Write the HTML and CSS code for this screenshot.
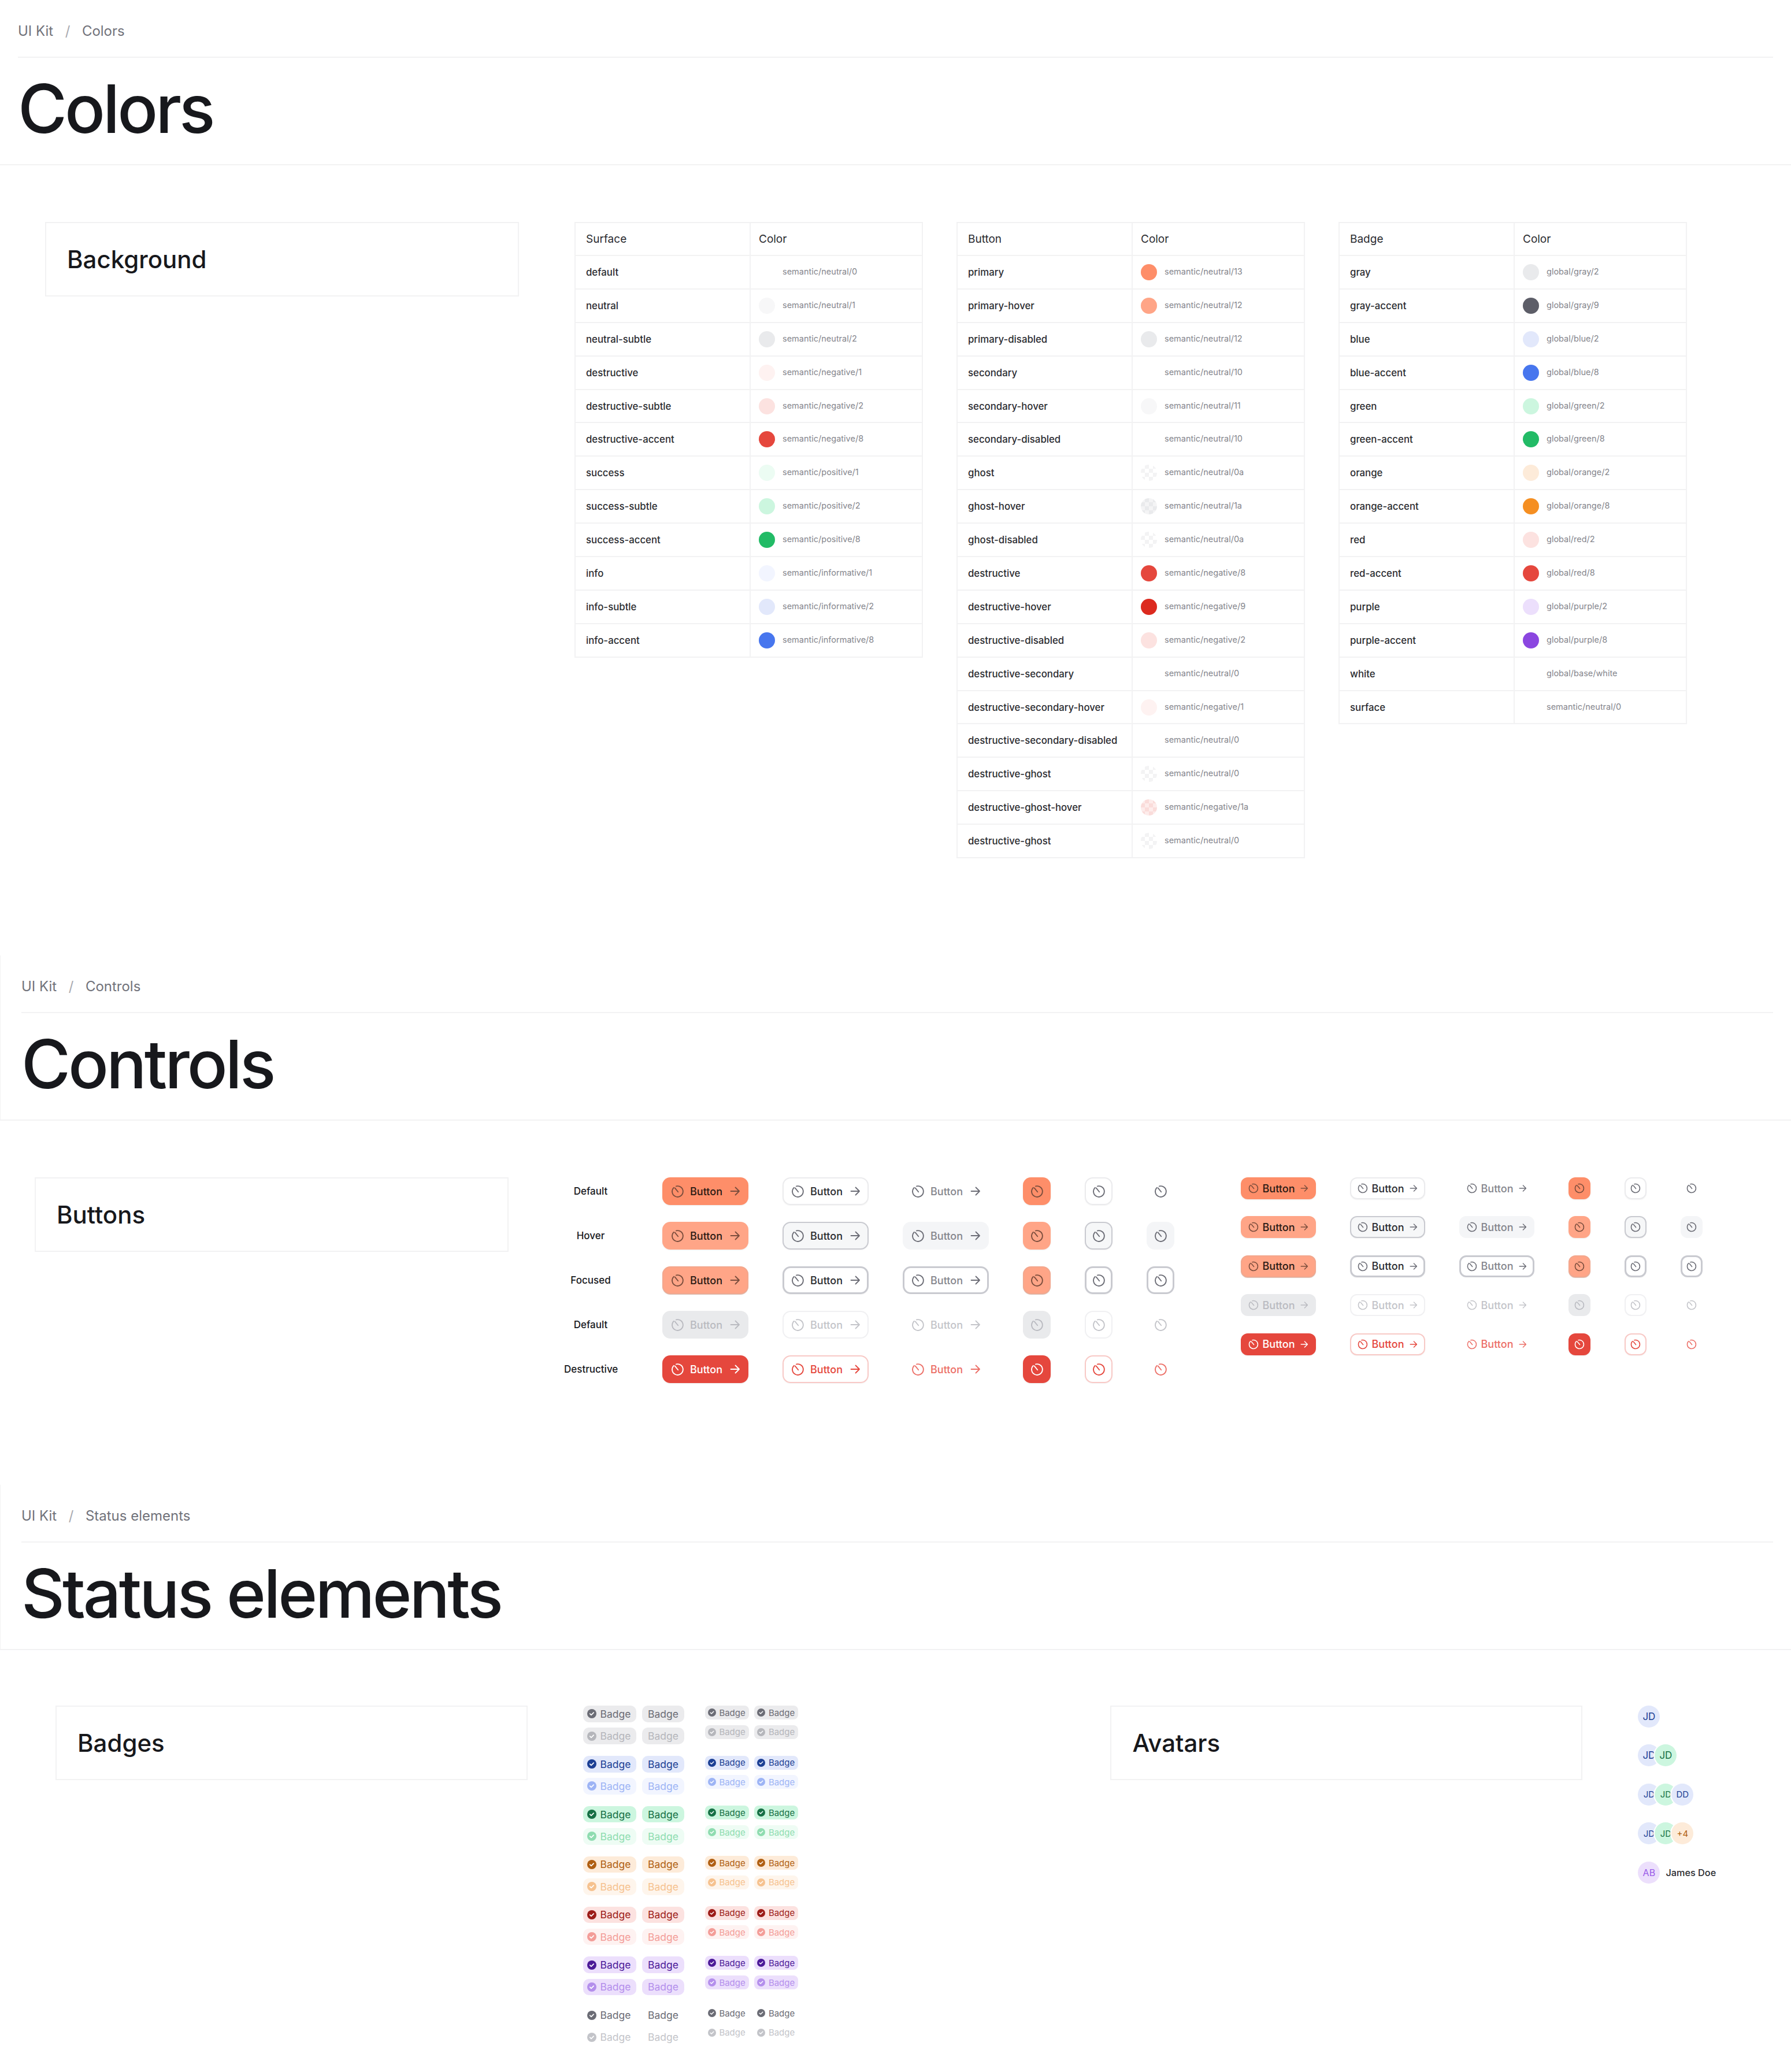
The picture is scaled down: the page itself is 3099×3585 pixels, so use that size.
FILE: index.html
```html
<!DOCTYPE html>
<html lang="en">
<head>
    <meta charset="UTF-8">
    <title>UI Kit</title>
    <link rel="stylesheet" href="styles.css">
</head>
<body>
    <!-- shared icons -->
    <svg class="sprite" aria-hidden="true">
        <symbol id="timer" viewBox="0 0 24 24"><path d="M9.6 3.3A9 9 0 1 1 5.6 5.6M7.4 6.2l5.3 6.5" fill="none" stroke="currentColor" stroke-width="1.8" stroke-linecap="round"/></symbol>
        <symbol id="arrow" viewBox="0 0 18 18"><path d="M1.5 9h14.5M9.5 2.5 16 9l-6.5 6.5" fill="none" stroke="currentColor" stroke-width="1.8" stroke-linecap="round" stroke-linejoin="round"/></symbol>
        <symbol id="check" viewBox="0 0 16 16"><circle cx="8" cy="8" r="8" fill="currentColor"/><path d="M4.8 8.2 7 10.3l4.2-4.2" fill="none" stroke="#fff" stroke-width="1.7" stroke-linecap="round" stroke-linejoin="round"/></symbol>
    </svg>

    <!-- Colors -->
    <section class="page page-colors">
        <header class="page-head">
            <nav class="crumbs"><span>UI Kit</span><span class="sep">/</span><span>Colors</span></nav>
            <h1>Colors</h1>
        </header>
        <div class="page-body">
            <div class="card"><h2>Background</h2></div>
            <div class="tables">
                <table>
                    <tr><th>Surface</th><th>Color</th></tr>
                    <tr><td>default</td><td><i class="dot"></i>semantic/neutral/0</td></tr>
                    <tr><td>neutral</td><td><i class="dot n1"></i>semantic/neutral/1</td></tr>
                    <tr><td>neutral-subtle</td><td><i class="dot n2"></i>semantic/neutral/2</td></tr>
                    <tr><td>destructive</td><td><i class="dot r1"></i>semantic/negative/1</td></tr>
                    <tr><td>destructive-subtle</td><td><i class="dot r2"></i>semantic/negative/2</td></tr>
                    <tr><td>destructive-accent</td><td><i class="dot r8"></i>semantic/negative/8</td></tr>
                    <tr><td>success</td><td><i class="dot g1"></i>semantic/positive/1</td></tr>
                    <tr><td>success-subtle</td><td><i class="dot g2"></i>semantic/positive/2</td></tr>
                    <tr><td>success-accent</td><td><i class="dot g8"></i>semantic/positive/8</td></tr>
                    <tr><td>info</td><td><i class="dot b1"></i>semantic/informative/1</td></tr>
                    <tr><td>info-subtle</td><td><i class="dot b2"></i>semantic/informative/2</td></tr>
                    <tr><td>info-accent</td><td><i class="dot b8"></i>semantic/informative/8</td></tr>
                </table>
                <table>
                    <tr><th>Button</th><th>Color</th></tr>
                    <tr><td>primary</td><td><i class="dot p13"></i>semantic/neutral/13</td></tr>
                    <tr><td>primary-hover</td><td><i class="dot p12"></i>semantic/neutral/12</td></tr>
                    <tr><td>primary-disabled</td><td><i class="dot n2"></i>semantic/neutral/12</td></tr>
                    <tr><td>secondary</td><td><i class="dot"></i>semantic/neutral/10</td></tr>
                    <tr><td>secondary-hover</td><td><i class="dot n1"></i>semantic/neutral/11</td></tr>
                    <tr><td>secondary-disabled</td><td><i class="dot"></i>semantic/neutral/10</td></tr>
                    <tr><td>ghost</td><td><i class="dot check-0"></i>semantic/neutral/0a</td></tr>
                    <tr><td>ghost-hover</td><td><i class="dot check-1"></i>semantic/neutral/1a</td></tr>
                    <tr><td>ghost-disabled</td><td><i class="dot check-0"></i>semantic/neutral/0a</td></tr>
                    <tr><td>destructive</td><td><i class="dot r8"></i>semantic/negative/8</td></tr>
                    <tr><td>destructive-hover</td><td><i class="dot r9"></i>semantic/negative/9</td></tr>
                    <tr><td>destructive-disabled</td><td><i class="dot r2"></i>semantic/negative/2</td></tr>
                    <tr><td>destructive-secondary</td><td><i class="dot"></i>semantic/neutral/0</td></tr>
                    <tr><td>destructive-secondary-hover</td><td><i class="dot r1"></i>semantic/negative/1</td></tr>
                    <tr><td>destructive-secondary-disabled</td><td><i class="dot"></i>semantic/neutral/0</td></tr>
                    <tr><td>destructive-ghost</td><td><i class="dot check-0"></i>semantic/neutral/0</td></tr>
                    <tr><td>destructive-ghost-hover</td><td><i class="dot check-r"></i>semantic/negative/1a</td></tr>
                    <tr><td>destructive-ghost</td><td><i class="dot check-0"></i>semantic/neutral/0</td></tr>
                </table>
                <table>
                    <tr><th>Badge</th><th>Color</th></tr>
                    <tr><td>gray</td><td><i class="dot n2"></i>global/gray/2</td></tr>
                    <tr><td>gray-accent</td><td><i class="dot n9"></i>global/gray/9</td></tr>
                    <tr><td>blue</td><td><i class="dot b2"></i>global/blue/2</td></tr>
                    <tr><td>blue-accent</td><td><i class="dot b8"></i>global/blue/8</td></tr>
                    <tr><td>green</td><td><i class="dot g2"></i>global/green/2</td></tr>
                    <tr><td>green-accent</td><td><i class="dot g8"></i>global/green/8</td></tr>
                    <tr><td>orange</td><td><i class="dot o2"></i>global/orange/2</td></tr>
                    <tr><td>orange-accent</td><td><i class="dot o8"></i>global/orange/8</td></tr>
                    <tr><td>red</td><td><i class="dot r2"></i>global/red/2</td></tr>
                    <tr><td>red-accent</td><td><i class="dot r8"></i>global/red/8</td></tr>
                    <tr><td>purple</td><td><i class="dot v2"></i>global/purple/2</td></tr>
                    <tr><td>purple-accent</td><td><i class="dot v8"></i>global/purple/8</td></tr>
                    <tr><td>white</td><td><i class="dot"></i>global/base/white</td></tr>
                    <tr><td>surface</td><td><i class="dot"></i>semantic/neutral/0</td></tr>
                </table>
            </div>
        </div>
    </section>

    <!-- Controls -->
    <section class="page page-controls">
        <header class="page-head">
            <nav class="crumbs"><span>UI Kit</span><span class="sep">/</span><span>Controls</span></nav>
            <h1>Controls</h1>
        </header>
        <div class="page-body">
            <div class="card"><h2>Buttons</h2></div>
            <div class="btn-grid">
                <div class="state">Default</div>
                <div class="btn primary"><svg class="ico"><use href="#timer"/></svg><span>Button</span><svg class="arr"><use href="#arrow"/></svg></div>
                <div class="btn secondary"><svg class="ico"><use href="#timer"/></svg><span>Button</span><svg class="arr"><use href="#arrow"/></svg></div>
                <div class="btn ghost"><svg class="ico"><use href="#timer"/></svg><span>Button</span><svg class="arr"><use href="#arrow"/></svg></div>
                <div class="btn primary"><svg class="ico"><use href="#timer"/></svg></div>
                <div class="btn secondary"><svg class="ico"><use href="#timer"/></svg></div>
                <div class="btn ghost"><svg class="ico"><use href="#timer"/></svg></div>

                <div class="state">Hover</div>
                <div class="btn primary hover"><svg class="ico"><use href="#timer"/></svg><span>Button</span><svg class="arr"><use href="#arrow"/></svg></div>
                <div class="btn secondary hover"><svg class="ico"><use href="#timer"/></svg><span>Button</span><svg class="arr"><use href="#arrow"/></svg></div>
                <div class="btn ghost hover"><svg class="ico"><use href="#timer"/></svg><span>Button</span><svg class="arr"><use href="#arrow"/></svg></div>
                <div class="btn primary hover"><svg class="ico"><use href="#timer"/></svg></div>
                <div class="btn secondary hover"><svg class="ico"><use href="#timer"/></svg></div>
                <div class="btn ghost hover"><svg class="ico"><use href="#timer"/></svg></div>

                <div class="state">Focused</div>
                <div class="btn primary focus"><svg class="ico"><use href="#timer"/></svg><span>Button</span><svg class="arr"><use href="#arrow"/></svg></div>
                <div class="btn secondary focus"><svg class="ico"><use href="#timer"/></svg><span>Button</span><svg class="arr"><use href="#arrow"/></svg></div>
                <div class="btn ghost focus"><svg class="ico"><use href="#timer"/></svg><span>Button</span><svg class="arr"><use href="#arrow"/></svg></div>
                <div class="btn primary focus"><svg class="ico"><use href="#timer"/></svg></div>
                <div class="btn secondary focus"><svg class="ico"><use href="#timer"/></svg></div>
                <div class="btn ghost focus"><svg class="ico"><use href="#timer"/></svg></div>

                <div class="state">Default</div>
                <div class="btn primary off"><svg class="ico"><use href="#timer"/></svg><span>Button</span><svg class="arr"><use href="#arrow"/></svg></div>
                <div class="btn secondary off"><svg class="ico"><use href="#timer"/></svg><span>Button</span><svg class="arr"><use href="#arrow"/></svg></div>
                <div class="btn ghost off"><svg class="ico"><use href="#timer"/></svg><span>Button</span><svg class="arr"><use href="#arrow"/></svg></div>
                <div class="btn primary off"><svg class="ico"><use href="#timer"/></svg></div>
                <div class="btn secondary off"><svg class="ico"><use href="#timer"/></svg></div>
                <div class="btn ghost off"><svg class="ico"><use href="#timer"/></svg></div>

                <div class="state">Destructive</div>
                <div class="btn primary danger"><svg class="ico"><use href="#timer"/></svg><span>Button</span><svg class="arr"><use href="#arrow"/></svg></div>
                <div class="btn secondary danger"><svg class="ico"><use href="#timer"/></svg><span>Button</span><svg class="arr"><use href="#arrow"/></svg></div>
                <div class="btn ghost danger"><svg class="ico"><use href="#timer"/></svg><span>Button</span><svg class="arr"><use href="#arrow"/></svg></div>
                <div class="btn primary danger"><svg class="ico"><use href="#timer"/></svg></div>
                <div class="btn secondary danger"><svg class="ico"><use href="#timer"/></svg></div>
                <div class="btn ghost danger"><svg class="ico"><use href="#timer"/></svg></div>
            </div>
            <div class="btn-grid small">
                <div class="btn primary"><svg class="ico"><use href="#timer"/></svg><span>Button</span><svg class="arr"><use href="#arrow"/></svg></div>
                <div class="btn secondary"><svg class="ico"><use href="#timer"/></svg><span>Button</span><svg class="arr"><use href="#arrow"/></svg></div>
                <div class="btn ghost"><svg class="ico"><use href="#timer"/></svg><span>Button</span><svg class="arr"><use href="#arrow"/></svg></div>
                <div class="btn primary"><svg class="ico"><use href="#timer"/></svg></div>
                <div class="btn secondary"><svg class="ico"><use href="#timer"/></svg></div>
                <div class="btn ghost"><svg class="ico"><use href="#timer"/></svg></div>

                <div class="btn primary hover"><svg class="ico"><use href="#timer"/></svg><span>Button</span><svg class="arr"><use href="#arrow"/></svg></div>
                <div class="btn secondary hover"><svg class="ico"><use href="#timer"/></svg><span>Button</span><svg class="arr"><use href="#arrow"/></svg></div>
                <div class="btn ghost hover"><svg class="ico"><use href="#timer"/></svg><span>Button</span><svg class="arr"><use href="#arrow"/></svg></div>
                <div class="btn primary hover"><svg class="ico"><use href="#timer"/></svg></div>
                <div class="btn secondary hover"><svg class="ico"><use href="#timer"/></svg></div>
                <div class="btn ghost hover"><svg class="ico"><use href="#timer"/></svg></div>

                <div class="btn primary focus"><svg class="ico"><use href="#timer"/></svg><span>Button</span><svg class="arr"><use href="#arrow"/></svg></div>
                <div class="btn secondary focus"><svg class="ico"><use href="#timer"/></svg><span>Button</span><svg class="arr"><use href="#arrow"/></svg></div>
                <div class="btn ghost focus"><svg class="ico"><use href="#timer"/></svg><span>Button</span><svg class="arr"><use href="#arrow"/></svg></div>
                <div class="btn primary focus"><svg class="ico"><use href="#timer"/></svg></div>
                <div class="btn secondary focus"><svg class="ico"><use href="#timer"/></svg></div>
                <div class="btn ghost focus"><svg class="ico"><use href="#timer"/></svg></div>

                <div class="btn primary off"><svg class="ico"><use href="#timer"/></svg><span>Button</span><svg class="arr"><use href="#arrow"/></svg></div>
                <div class="btn secondary off"><svg class="ico"><use href="#timer"/></svg><span>Button</span><svg class="arr"><use href="#arrow"/></svg></div>
                <div class="btn ghost off"><svg class="ico"><use href="#timer"/></svg><span>Button</span><svg class="arr"><use href="#arrow"/></svg></div>
                <div class="btn primary off"><svg class="ico"><use href="#timer"/></svg></div>
                <div class="btn secondary off"><svg class="ico"><use href="#timer"/></svg></div>
                <div class="btn ghost off"><svg class="ico"><use href="#timer"/></svg></div>

                <div class="btn primary danger"><svg class="ico"><use href="#timer"/></svg><span>Button</span><svg class="arr"><use href="#arrow"/></svg></div>
                <div class="btn secondary danger"><svg class="ico"><use href="#timer"/></svg><span>Button</span><svg class="arr"><use href="#arrow"/></svg></div>
                <div class="btn ghost danger"><svg class="ico"><use href="#timer"/></svg><span>Button</span><svg class="arr"><use href="#arrow"/></svg></div>
                <div class="btn primary danger"><svg class="ico"><use href="#timer"/></svg></div>
                <div class="btn secondary danger"><svg class="ico"><use href="#timer"/></svg></div>
                <div class="btn ghost danger"><svg class="ico"><use href="#timer"/></svg></div>
            </div>
        </div>
    </section>

    <!-- Status elements -->
    <section class="page page-status">
        <header class="page-head">
            <nav class="crumbs"><span>UI Kit</span><span class="sep">/</span><span>Status elements</span></nav>
            <h1>Status elements</h1>
        </header>
        <div class="page-body">
            <div class="card"><h2>Badges</h2></div>
            <div class="badge-sheet">
                <div class="badge-col">
                    <div class="badge-group gray">
                        <div class="badge-row"><span class="badge"><svg><use href="#check"/></svg>Badge</span><span class="badge"><b>Badge</b></span></div>
                        <div class="badge-row off"><span class="badge"><svg><use href="#check"/></svg>Badge</span><span class="badge"><b>Badge</b></span></div>
                    </div>
                    <div class="badge-group blue">
                        <div class="badge-row"><span class="badge"><svg><use href="#check"/></svg>Badge</span><span class="badge"><b>Badge</b></span></div>
                        <div class="badge-row off"><span class="badge"><svg><use href="#check"/></svg>Badge</span><span class="badge"><b>Badge</b></span></div>
                    </div>
                    <div class="badge-group green">
                        <div class="badge-row"><span class="badge"><svg><use href="#check"/></svg>Badge</span><span class="badge"><b>Badge</b></span></div>
                        <div class="badge-row off"><span class="badge"><svg><use href="#check"/></svg>Badge</span><span class="badge"><b>Badge</b></span></div>
                    </div>
                    <div class="badge-group orange">
                        <div class="badge-row"><span class="badge"><svg><use href="#check"/></svg>Badge</span><span class="badge"><b>Badge</b></span></div>
                        <div class="badge-row off"><span class="badge"><svg><use href="#check"/></svg>Badge</span><span class="badge"><b>Badge</b></span></div>
                    </div>
                    <div class="badge-group red">
                        <div class="badge-row"><span class="badge"><svg><use href="#check"/></svg>Badge</span><span class="badge"><b>Badge</b></span></div>
                        <div class="badge-row off"><span class="badge"><svg><use href="#check"/></svg>Badge</span><span class="badge"><b>Badge</b></span></div>
                    </div>
                    <div class="badge-group purple">
                        <div class="badge-row"><span class="badge"><svg><use href="#check"/></svg>Badge</span><span class="badge"><b>Badge</b></span></div>
                        <div class="badge-row off"><span class="badge"><svg><use href="#check"/></svg>Badge</span><span class="badge"><b>Badge</b></span></div>
                    </div>
                    <div class="badge-group plain">
                        <div class="badge-row"><span class="badge"><svg><use href="#check"/></svg>Badge</span><span class="badge"><b>Badge</b></span></div>
                        <div class="badge-row off"><span class="badge"><svg><use href="#check"/></svg>Badge</span><span class="badge"><b>Badge</b></span></div>
                    </div>
                </div>
                <div class="badge-col small">
                    <div class="badge-group gray">
                        <div class="badge-row"><span class="badge"><svg><use href="#check"/></svg>Badge</span><span class="badge"><svg><use href="#check"/></svg>Badge</span></div>
                        <div class="badge-row off"><span class="badge"><svg><use href="#check"/></svg>Badge</span><span class="badge"><svg><use href="#check"/></svg>Badge</span></div>
                    </div>
                    <div class="badge-group blue">
                        <div class="badge-row"><span class="badge"><svg><use href="#check"/></svg>Badge</span><span class="badge"><svg><use href="#check"/></svg>Badge</span></div>
                        <div class="badge-row off"><span class="badge"><svg><use href="#check"/></svg>Badge</span><span class="badge"><svg><use href="#check"/></svg>Badge</span></div>
                    </div>
                    <div class="badge-group green">
                        <div class="badge-row"><span class="badge"><svg><use href="#check"/></svg>Badge</span><span class="badge"><svg><use href="#check"/></svg>Badge</span></div>
                        <div class="badge-row off"><span class="badge"><svg><use href="#check"/></svg>Badge</span><span class="badge"><svg><use href="#check"/></svg>Badge</span></div>
                    </div>
                    <div class="badge-group orange">
                        <div class="badge-row"><span class="badge"><svg><use href="#check"/></svg>Badge</span><span class="badge"><svg><use href="#check"/></svg>Badge</span></div>
                        <div class="badge-row off"><span class="badge"><svg><use href="#check"/></svg>Badge</span><span class="badge"><svg><use href="#check"/></svg>Badge</span></div>
                    </div>
                    <div class="badge-group red">
                        <div class="badge-row"><span class="badge"><svg><use href="#check"/></svg>Badge</span><span class="badge"><svg><use href="#check"/></svg>Badge</span></div>
                        <div class="badge-row off"><span class="badge"><svg><use href="#check"/></svg>Badge</span><span class="badge"><svg><use href="#check"/></svg>Badge</span></div>
                    </div>
                    <div class="badge-group purple">
                        <div class="badge-row"><span class="badge"><svg><use href="#check"/></svg>Badge</span><span class="badge"><svg><use href="#check"/></svg>Badge</span></div>
                        <div class="badge-row off"><span class="badge"><svg><use href="#check"/></svg>Badge</span><span class="badge"><svg><use href="#check"/></svg>Badge</span></div>
                    </div>
                    <div class="badge-group plain">
                        <div class="badge-row"><span class="badge"><svg><use href="#check"/></svg>Badge</span><span class="badge"><svg><use href="#check"/></svg>Badge</span></div>
                        <div class="badge-row off"><span class="badge"><svg><use href="#check"/></svg>Badge</span><span class="badge"><svg><use href="#check"/></svg>Badge</span></div>
                    </div>
                </div>
            </div>
            <div class="card card-avatars"><h2>Avatars</h2></div>
            <div class="avatars">
                <div class="avatar-row"><span class="avatar blue">JD</span></div>
                <div class="avatar-row stack"><span class="avatar blue"><em>JD</em></span><span class="avatar green">JD</span></div>
                <div class="avatar-row stack tight"><span class="avatar blue"><em>JD</em></span><span class="avatar green"><em>JD</em></span><span class="avatar blue">DD</span></div>
                <div class="avatar-row stack tight"><span class="avatar blue"><em>JD</em></span><span class="avatar green"><em>JD</em></span><span class="avatar orange">+4</span></div>
                <div class="avatar-row"><span class="avatar purple">AB</span><span class="avatar-name">James Doe</span></div>
            </div>
        </div>
    </section>
</body>
</html>
```

FILE: styles.css
```css
* {
    box-sizing: border-box;
}

body {
    margin: 0;
    background: #fff;
    color: #17181c;
    font-family: "Inter", "Liberation Sans", sans-serif;
}

.sprite {
    display: none;
}

/* page header */
.page-head {
    padding: 0 31px;
    border-bottom: 2px solid #f2f2f3;
}

.page-controls .page-head,
.page-status .page-head {
    padding-left: 37px;
    box-shadow: inset 1px 0 0 #f2f2f3;
}

.crumbs {
    display: flex;
    gap: 20.5px;
    height: 100px;
    padding-top: 37px;
    border-bottom: 2px solid #f2f2f3;
    color: #71727a;
    font-size: 24px;
    line-height: 34px;
}

.crumbs .sep {
    color: #a9aab0;
}

h1 {
    margin: 0;
    height: 184px;
    font-size: 116px;
    font-weight: 500;
    line-height: 176px;
    letter-spacing: -0.035em;
}

.page-body {
    display: flex;
    align-items: flex-start;
    gap: 96px;
    padding-top: 98px;
}

.page-colors .page-body {
    padding-left: 78px;
    padding-bottom: 168px;
}

.page-controls .page-body {
    padding-left: 60px;
    padding-bottom: 176px;
}

.page-status .page-body {
    padding-top: 96px;
    padding-left: 96px;
}

.card {
    display: flex;
    align-items: center;
    width: 820px;
    height: 129px;
    padding-left: 36px;
    border: 2px solid #f2f2f3;
}

.page-status .card {
    width: 817px;
}

h2 {
    margin: 0;
    font-size: 42px;
    font-weight: 450;
}

/* colour tables */
.tables {
    display: flex;
    align-items: flex-start;
    gap: 58px;
}

table {
    width: 603px;
    table-layout: fixed;
    border-collapse: collapse;
}

th, td {
    height: 57.9px;
    border: 2px solid #f2f2f3;
    padding: 0 0 0 18px;
    font-size: 16.8px;
    font-weight: 500;
    text-align: left;
    color: #2a2b30;
}

th {
    height: 57px;
    font-size: 19px;
    font-weight: 400;
}

th:first-child, td:first-child {
    width: 303px;
}

th:last-child {
    padding-left: 14px;
}

td:last-child {
    padding-left: 14px;
    font-size: 14.5px;
    font-weight: 400;
    color: #84858c;
}

.dot {
    display: inline-block;
    width: 28px;
    height: 28px;
    margin-right: 13px;
    border-radius: 50%;
    vertical-align: middle;
}

.n1 { background: #f7f7f8; }
.n2 { background: #e9eaec; }
.n9 { background: #5d5e68; }
.r1 { background: #fef2f1; }
.r2 { background: #fce2e0; }
.r8 { background: #e5473d; }
.r9 { background: #dc2a1f; }
.g1 { background: #ecfcf3; }
.g2 { background: #ccf6df; }
.g8 { background: #22bb66; }
.b1 { background: #f2f5ff; }
.b2 { background: #e2e8fb; }
.b8 { background: #4776ee; }
.o2 { background: #fdebd9; }
.o8 { background: #f58f22; }
.v2 { background: #ecdffc; }
.v8 { background: #8b46e0; }
.p13 { background: #fe8e69; }
.p12 { background: #ffa587; }

.check-0 { background: repeating-conic-gradient(#f3f3f4 0 25%, #fff 0 50%) 0 0 / 14px 14px; }
.check-1 { background: repeating-conic-gradient(#e9eaec 0 25%, #f4f4f5 0 50%) 0 0 / 14px 14px; }
.check-r { background: repeating-conic-gradient(#fadcda 0 25%, #fdeceb 0 50%) 0 0 / 14px 14px; }

/* buttons */
.btn-grid {
    display: grid;
    grid-template-columns: 111px 149px 149px 149px 48px 48px 48px;
    grid-auto-rows: 48px;
    column-gap: 59px;
    row-gap: 29px;
    align-items: center;
}

.btn-grid.small {
    grid-template-columns: 130px 130px 130px 38px 38px 38px;
    grid-auto-rows: 38px;
    row-gap: 29.4px;
    margin-left: 18.5px;
}

.state {
    padding-right: 19px;
    font-size: 17px;
    font-weight: 500;
    text-align: center;
    white-space: nowrap;
}

.btn {
    display: flex;
    align-items: center;
    justify-content: center;
    height: 100%;
    border: 2px solid transparent;
    border-radius: 14px;
    font-size: 18px;
    font-weight: 500;
}

.small .btn {
    border-radius: 12px;
}

.btn span {
    margin: 0 13px 0 9px;
}

.small .btn span {
    margin: 0 10px 0 6px;
}

.ico {
    width: 25px;
    height: 25px;
    color: #6b6c75;
}

.arr {
    width: 18px;
    height: 18px;
    color: #6b6c75;
}

.small .ico {
    width: 20px;
    height: 20px;
}

.small .arr {
    width: 14px;
    height: 14px;
}

.btn.primary {
    background: #fe8e69;
    color: #2a1a14;
    box-shadow: 0 1px 2px rgba(23, 24, 28, 0.08);
}

.btn.primary .ico, .btn.primary .arr {
    color: #7a4d3d;
}

.btn.primary.hover {
    background: #ffa587;
}

.btn.primary.focus {
    background: #ffa587;
    border-color: #f3a78d;
    box-shadow: 0 1px 1px #d7b8ae;
}

.btn.primary.off {
    background: #e9eaec;
    color: #b9bac0;
    box-shadow: none;
}

.btn.primary.off .ico, .btn.primary.off .arr {
    color: #b9bac0;
}

.btn.primary.danger {
    background: #e5473d;
    color: #fff;
}

.btn.primary.danger .ico, .btn.primary.danger .arr {
    color: #fff;
}

.btn.secondary {
    border-color: #ebebed;
    color: #2a2b30;
    box-shadow: 0 1px 2px rgba(23, 24, 28, 0.05);
}

.btn.secondary.hover {
    background: #f6f7f8;
    border-color: #c9cad0;
}

.btn.secondary.focus {
    border: 3px solid #c9cad0;
}

.btn.secondary.off {
    border-color: #f0f0f2;
    color: #c3c4c9;
    box-shadow: none;
}

.btn.secondary.off .ico, .btn.secondary.off .arr,
.btn.ghost.off .ico, .btn.ghost.off .arr {
    color: #c3c4c9;
}

.btn.secondary.danger {
    border-color: #f8c9c6;
    color: #e5473d;
}

.btn.secondary.danger .ico, .btn.secondary.danger .arr {
    color: #e5473d;
}

.btn.ghost {
    color: #85868d;
}

.btn.ghost.hover {
    background: #f4f5f7;
}

.btn.ghost.focus {
    border: 3px solid #c9cad0;
}

.btn.ghost.off {
    color: #c3c4c9;
}

.btn.ghost.danger, .btn.ghost.danger .ico, .btn.ghost.danger .arr {
    color: #ec6f67;
}

/* badges */
.badge-sheet {
    display: flex;
    align-items: flex-start;
    gap: 36px;
}

.badge-col {
    display: flex;
    flex-direction: column;
    gap: 20px;
}

.badge-col.small {
    gap: 29px;
}

.badge-group {
    display: flex;
    flex-direction: column;
    gap: 9.7px;
}

.badge-row {
    display: flex;
    gap: 10px;
    height: 28.6px;
}

.small .badge-row {
    gap: 9.5px;
    height: 24px;
}

.badge {
    display: flex;
    align-items: center;
    gap: 7px;
    padding: 0 10px 0 6.5px;
    border-radius: 10px;
    background: var(--bg);
    color: var(--fg);
    font-size: 17.5px;
}

.badge b {
    padding-left: 3px;
    font-weight: 400;
}

.badge svg {
    width: 16px;
    height: 16px;
}

.small .badge {
    gap: 5.5px;
    width: 76px;
    padding: 0 0 0 5px;
    border-radius: 8px;
    font-size: 15px;
}

.small .badge svg {
    width: 14px;
    height: 14px;
}

.gray { --bg: #ebebed; --fg: #6b6c75; --bg-off: #ebebed; --fg-off: #b5b6bb; }
.blue { --bg: #e2e8fb; --fg: #1c3f94; --bg-off: #f2f5ff; --fg-off: #9db4f5; }
.green { --bg: #ccf6df; --fg: #167045; --bg-off: #eefcf4; --fg-off: #8fdcb0; }
.orange { --bg: #fdebd9; --fg: #b05f12; --bg-off: #fef5ec; --fg-off: #f6c28f; }
.red { --bg: #fce2e0; --fg: #9c1c18; --bg-off: #fef2f1; --fg-off: #f39d98; }
.purple { --bg: #ecdffc; --fg: #4c1a98; --bg-off: #ecdffc; --fg-off: #b48fec; }
.plain { --bg: transparent; --fg: #6b6c75; --bg-off: transparent; --fg-off: #c3c4c9; }

.badge-row.off .badge {
    background: var(--bg-off);
    color: var(--fg-off);
}

/* avatars */
.card-avatars {
    margin-left: 444px;
}

.avatars {
    display: flex;
    flex-direction: column;
    gap: 29.4px;
}

.avatar-row {
    display: flex;
    align-items: center;
    height: 38px;
}

.avatar {
    display: flex;
    align-items: center;
    justify-content: center;
    width: 38px;
    height: 38px;
    overflow: hidden;
    border-radius: 50%;
    background: var(--bg);
    color: var(--fg);
    font-size: 17px;
    flex: none;
}

.avatar.purple {
    color: #9a5be8;
    font-size: 16px;
}

.avatar em {
    font-style: normal;
}

.stack .avatar + .avatar {
    margin-left: -9px;
    box-shadow: 0 0 0 2px #fff;
}

.tight .avatar {
    font-size: 15px;
}

.avatar-name {
    margin-left: 10px;
    font-size: 16.3px;
    font-weight: 500;
    color: #2a2b30;
}
```
